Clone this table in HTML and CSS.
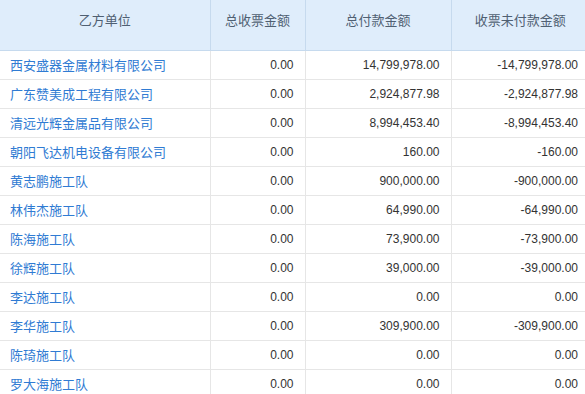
FILE: index.html
```html
<!DOCTYPE html>
<html lang="zh-CN">
<head>
  <meta charset="UTF-8">
  <title>付款汇总</title>
  <link rel="stylesheet" href="styles.css">
</head>
<body>
  <table class="grid">
    <colgroup>
      <col class="c-name">
      <col class="c-bill">
      <col class="c-paid">
      <col class="c-left">
    </colgroup>
    <thead>
      <tr>
        <th>乙方单位</th>
        <th>总收票金额</th>
        <th>总付款金额</th>
        <th>收票未付款金额</th>
      </tr>
    </thead>
    <tbody>
      <tr><td><a href="#">西安盛器金属材料有限公司</a></td><td class="num">0.00</td><td class="num">14,799,978.00</td><td class="num">-14,799,978.00</td></tr>
      <tr><td><a href="#">广东赞美成工程有限公司</a></td><td class="num">0.00</td><td class="num">2,924,877.98</td><td class="num">-2,924,877.98</td></tr>
      <tr><td><a href="#">清远光辉金属品有限公司</a></td><td class="num">0.00</td><td class="num">8,994,453.40</td><td class="num">-8,994,453.40</td></tr>
      <tr><td><a href="#">朝阳飞达机电设备有限公司</a></td><td class="num">0.00</td><td class="num">160.00</td><td class="num">-160.00</td></tr>
      <tr><td><a href="#">黄志鹏施工队</a></td><td class="num">0.00</td><td class="num">900,000.00</td><td class="num">-900,000.00</td></tr>
      <tr><td><a href="#">林伟杰施工队</a></td><td class="num">0.00</td><td class="num">64,990.00</td><td class="num">-64,990.00</td></tr>
      <tr><td><a href="#">陈海施工队</a></td><td class="num">0.00</td><td class="num">73,900.00</td><td class="num">-73,900.00</td></tr>
      <tr><td><a href="#">徐辉施工队</a></td><td class="num">0.00</td><td class="num">39,000.00</td><td class="num">-39,000.00</td></tr>
      <tr><td><a href="#">李达施工队</a></td><td class="num">0.00</td><td class="num">0.00</td><td class="num">0.00</td></tr>
      <tr><td><a href="#">李华施工队</a></td><td class="num">0.00</td><td class="num">309,900.00</td><td class="num">-309,900.00</td></tr>
      <tr><td><a href="#">陈琦施工队</a></td><td class="num">0.00</td><td class="num">0.00</td><td class="num">0.00</td></tr>
      <tr><td><a href="#">罗大海施工队</a></td><td class="num">0.00</td><td class="num">0.00</td><td class="num">0.00</td></tr>
    </tbody>
  </table>
</body>
</html>
```

FILE: styles.css
```css
body {
  margin: 0;
  background: #ffffff;
  font-family: "Liberation Sans", "Noto Sans CJK SC", sans-serif;
  color: #333333;
  overflow: hidden;
}

.grid {
  width: 589px;
  table-layout: fixed;
  border-collapse: collapse;
}

.c-name { width: 210px; }
.c-bill { width: 95px; }
.c-paid { width: 146px; }
.c-left { width: 138px; }

.grid th {
  height: 50px;
  padding: 0 0 10px;
  box-sizing: border-box;
  background: #dfedfb;
  border-left: 1px solid #c6daee;
  border-bottom: 1px solid #c6daee;
  color: #4f6072;
  font-size: 13px;
  font-weight: normal;
  text-align: center;
  vertical-align: middle;
}

.grid th:first-child,
.grid td:first-child {
  border-left: none;
}

.grid td {
  height: 29px;
  padding: 0 10px;
  box-sizing: border-box;
  border-left: 1px solid #e6e6e6;
  border-bottom: 1px solid #e6e6e6;
  font-size: 13px;
  white-space: nowrap;
  vertical-align: middle;
}

.grid td.num {
  font-size: 12px;
  text-align: right;
  padding-right: 11px;
}

.grid a {
  color: #2f7bd3;
  text-decoration: none;
}
```
